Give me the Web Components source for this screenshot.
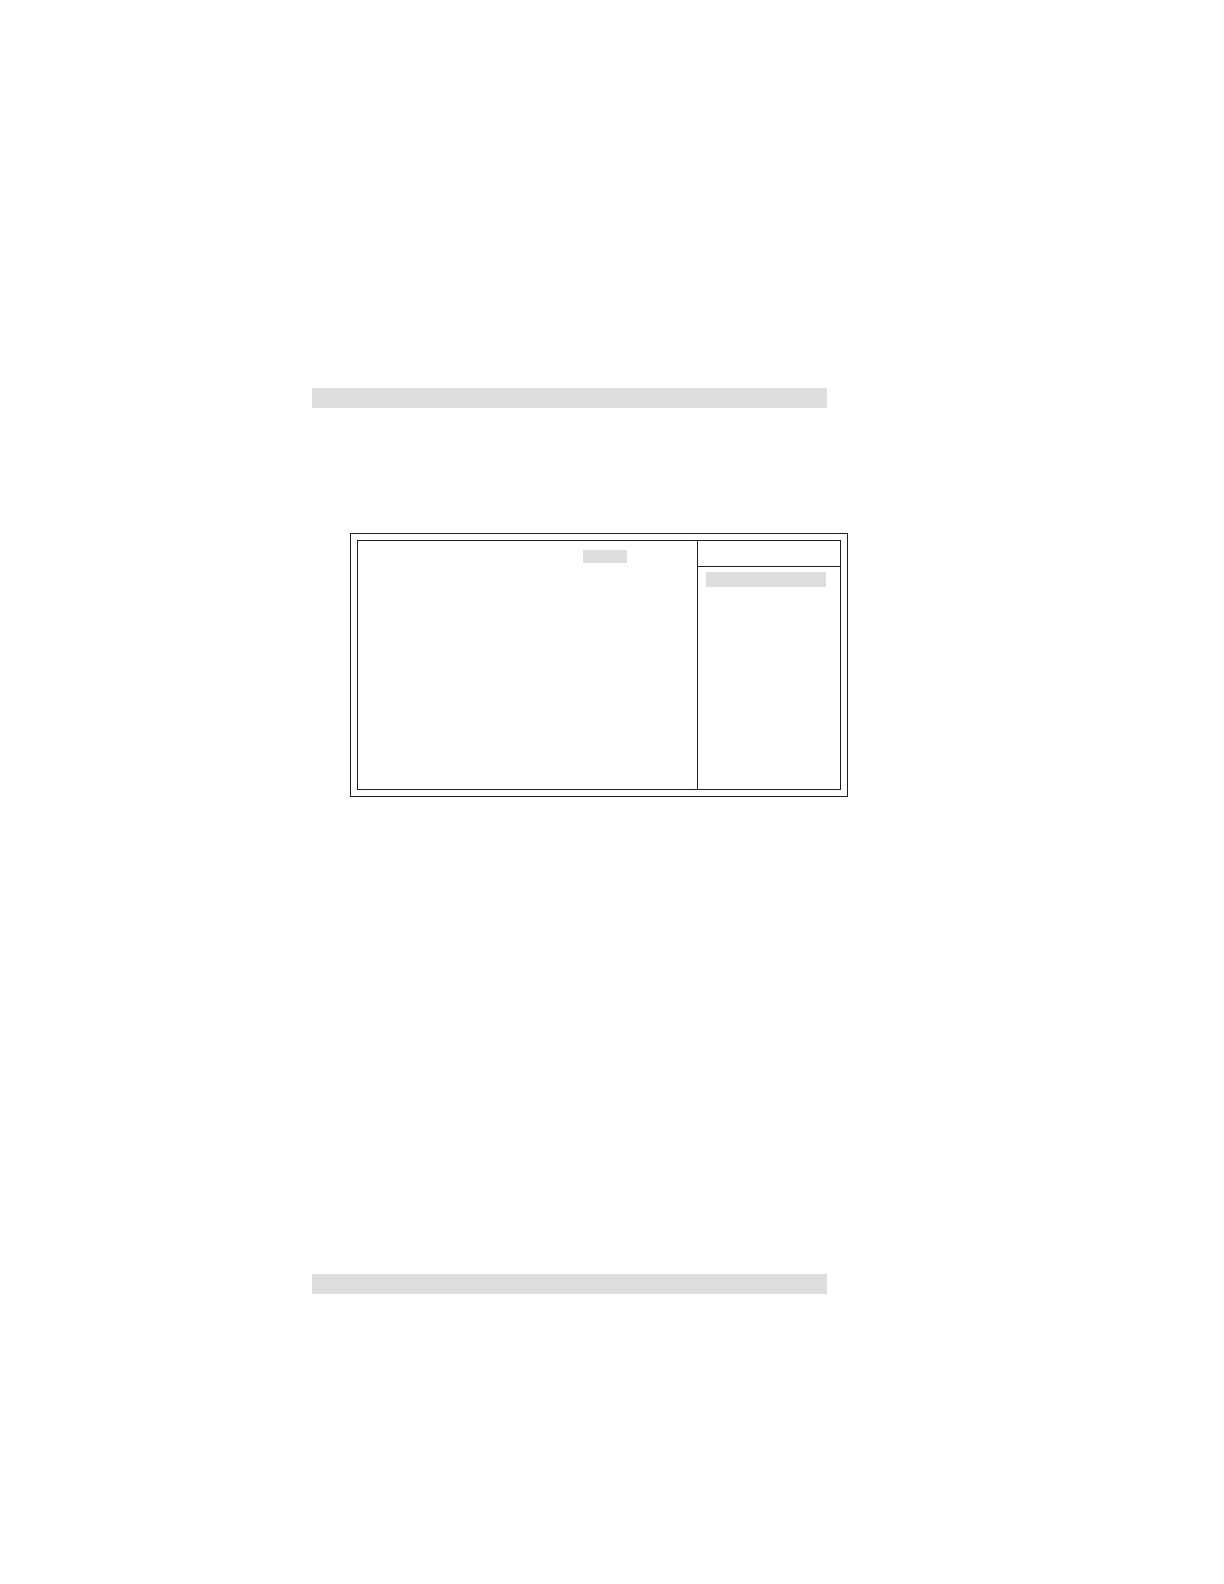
<!DOCTYPE html>
<html lang="en">
<head>
<meta charset="utf-8">
<meta name="viewport" content="width=device-width, initial-scale=1">
<title>Setup screen</title>
<style>
  body { margin: 0; background: #fff; }
</style>
</head>
<body>
<manual-page>
  <shade-bar slot="header"></shade-bar>
  <setup-frame>
    <shade-bar slot="main" class="value"></shade-bar>
    <shade-bar slot="help" class="item"></shade-bar>
  </setup-frame>
  <shade-bar slot="footer"></shade-bar>
</manual-page>

<template id="manual-page">
  <style>
    :host {
      display: grid;
      grid-template-columns: 312fr 515fr 397fr;
      box-sizing: border-box;
      min-height: 100vh;
      padding-top: 388px;
      --ink: #231f20;
      --shade: #dcdddd;
    }
    .sheet { grid-column: 2; display: flex; flex-direction: column; min-width: 0; }
    ::slotted(shade-bar) { height: 20px; }
    main { margin: 125px -21px 477px 38px; }
  </style>
  <div class="sheet">
    <slot name="header"></slot>
    <main><slot></slot></main>
    <slot name="footer"></slot>
  </div>
</template>

<template id="setup-frame">
  <style>
    :host { display: block; border: 1px solid var(--ink); padding: 6px; }
    .inner {
      display: grid;
      grid-template-columns: 339fr 143fr;
      min-height: 248px;
      border: 1px solid var(--ink);
    }
    .main { display: flex; justify-content: flex-end; padding: 9px 70px 9px 9px; }
    .side { display: flex; flex-direction: column; border-left: 1px solid var(--ink); }
    .title { height: 25px; border-bottom: 1px solid var(--ink); }
    .help { padding: 5px 14px 5px 8px; }
    ::slotted(.value) { width: 44px; height: 13px; }
    ::slotted(.item) { height: 15px; }
  </style>
  <div class="inner">
    <section class="main"><slot name="main"></slot></section>
    <aside class="side">
      <div class="title"></div>
      <div class="help"><slot name="help"></slot></div>
    </aside>
  </div>
</template>

<template id="shade-bar">
  <style>
    :host { display: block; background: var(--shade); }
  </style>
</template>

<script>
  class TemplateElement extends HTMLElement {
    constructor() {
      super();
      const template = document.getElementById(this.localName);
      this.attachShadow({ mode: "open" }).append(template.content.cloneNode(true));
    }
  }
  customElements.define("manual-page", class extends TemplateElement {});
  customElements.define("setup-frame", class extends TemplateElement {});
  customElements.define("shade-bar", class extends TemplateElement {});
</script>
</body>
</html>
